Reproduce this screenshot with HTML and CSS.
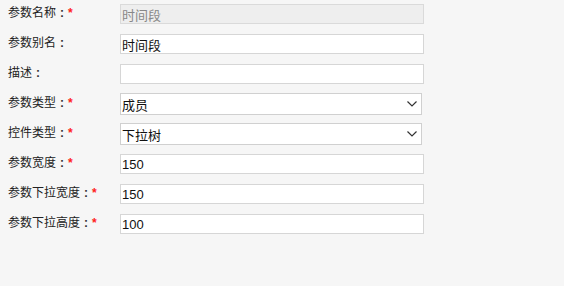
FILE: index.html
```html
<!DOCTYPE html>
<html lang="zh-CN">
<head>
<meta charset="utf-8">
<title>参数</title>
<link rel="stylesheet" href="styles.css">
</head>
<body>
<form class="form">
  <div class="row">
    <label class="label">参数名称<span class="colon">:</span><span class="req">*</span></label>
    <input class="field" type="text" value="时间段" disabled>
  </div>
  <div class="row">
    <label class="label">参数别名<span class="colon">:</span></label>
    <input class="field" type="text" value="时间段">
  </div>
  <div class="row">
    <label class="label">描述<span class="colon">:</span></label>
    <input class="field" type="text" value="">
  </div>
  <div class="row">
    <label class="label">参数类型<span class="colon">:</span><span class="req">*</span></label>
    <div class="select">
      <span class="select-text">成员</span>
      <svg class="chev" width="10" height="6" viewBox="0 0 10 6"><path d="M0.5 0.5 L5 5 L9.5 0.5" fill="none" stroke="#333" stroke-width="1.2"/></svg>
    </div>
  </div>
  <div class="row">
    <label class="label">控件类型<span class="colon">:</span><span class="req">*</span></label>
    <div class="select">
      <span class="select-text">下拉树</span>
      <svg class="chev" width="10" height="6" viewBox="0 0 10 6"><path d="M0.5 0.5 L5 5 L9.5 0.5" fill="none" stroke="#333" stroke-width="1.2"/></svg>
    </div>
  </div>
  <div class="row">
    <label class="label">参数宽度<span class="colon">:</span><span class="req">*</span></label>
    <input class="field" type="text" value="150">
  </div>
  <div class="row">
    <label class="label">参数下拉宽度<span class="colon">:</span><span class="req">*</span></label>
    <input class="field" type="text" value="150">
  </div>
  <div class="row">
    <label class="label">参数下拉高度<span class="colon">:</span><span class="req">*</span></label>
    <input class="field" type="text" value="100">
  </div>
</form>
</body>
</html>
```

FILE: styles.css
```css
html, body {
  margin: 0;
  padding: 0;
  background: #f6f6f6;
}
body {
  font-family: "Liberation Sans", "Noto Sans CJK SC", sans-serif;
  color: #222;
}
.form {
  display: flex;
  flex-direction: column;
  gap: 10px;
  padding: 4px 0 0 8px;
}
.row {
  display: flex;
  align-items: center;
  height: 20px;
}
.label {
  width: 112px;
  flex: none;
  font-size: 12px;
  line-height: 16px;
  margin-top: -3px;
  color: #222;
  white-space: nowrap;
}
.colon {
  display: inline-block;
  width: 12px;
  text-align: center;
  font-weight: bold;
  color: #333;
}
.req {
  color: #ff2020;
  font-size: 12px;
  font-weight: bold;
}
.field {
  box-sizing: border-box;
  width: 304px;
  height: 20px;
  margin: 0;
  padding: 0 1px;
  border: 1px solid #d6d6d6;
  background: #fff;
  font-family: "Liberation Sans", "Noto Sans CJK SC", sans-serif;
  font-size: 13px;
  color: #111;
  outline: none;
}
.field:disabled {
  background: #eeeeee;
  border-color: #dadada;
  color: #888;
}
.select {
  box-sizing: border-box;
  width: 302px;
  height: 22px;
  margin: -1px 0;
  padding: 0 4px 0 1px;
  border: 1px solid #d0d0d0;
  background: #fff;
  display: flex;
  align-items: center;
  justify-content: space-between;
  font-size: 13px;
  color: #111;
}
.chev {
  display: block;
}
```
